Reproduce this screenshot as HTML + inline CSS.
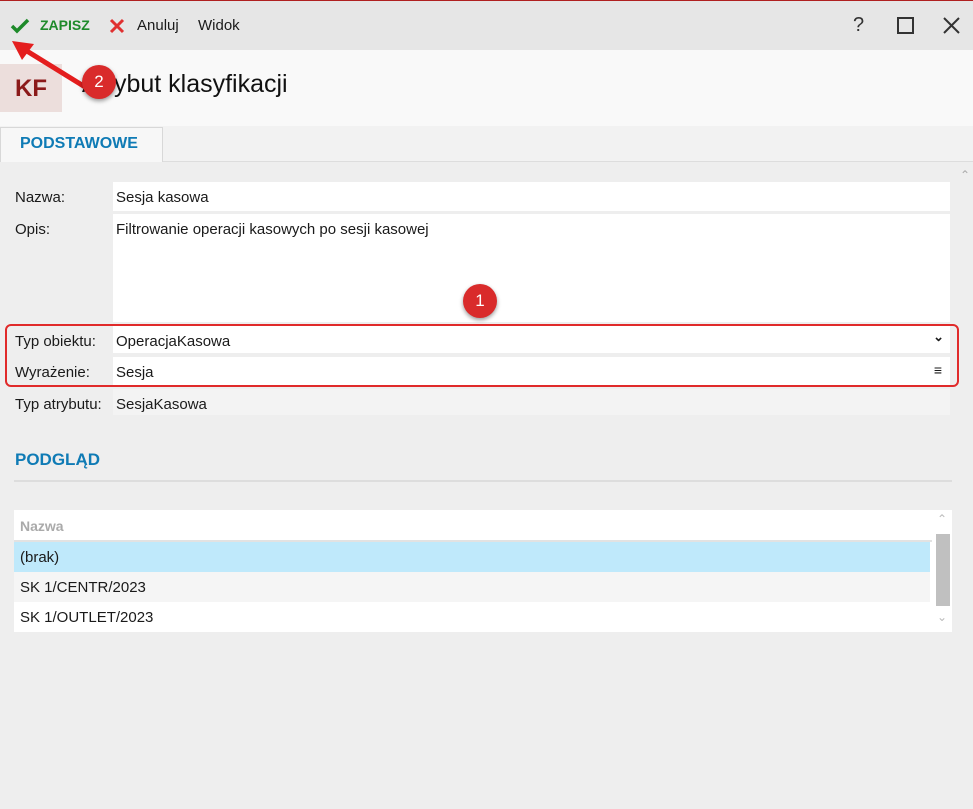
<!DOCTYPE html>
<html><head><meta charset="utf-8"><style>
*{margin:0;padding:0;box-sizing:border-box}
body{width:973px;height:809px;background:#eeeeee;font-family:"Segoe UI","Liberation Sans",sans-serif;font-size:15px;color:#1a1a1a;position:relative;overflow:hidden}
.a{position:absolute}
.inp{position:absolute;background:#fff;left:113px;width:837px;padding:7px 3px;}
.lbl{position:absolute;left:15px;}
</style></head><body>
<div class="a" style="left:0;top:0;width:973px;height:50px;background:#e6e6e6;border-top:1px solid #b02020"></div>
<svg class="a" style="left:10px;top:17px" width="20" height="18"><path d="M2 9 L7 14 L18 3" stroke="#1e8a2a" stroke-width="3.5" fill="none"/></svg>
<div class="a" style="left:40px;top:17px;color:#1e8a2a;font-weight:bold;font-size:14px">ZAPISZ</div>
<svg class="a" style="left:109px;top:18px" width="16" height="16"><path d="M2 2L14 14M14 2L2 14" stroke="#e03030" stroke-width="3"/></svg>
<div class="a" style="left:137px;top:17px">Anuluj</div>
<div class="a" style="left:198px;top:17px">Widok</div>
<div class="a" style="left:853px;top:14px;font-size:20px;color:#333">?</div>
<div class="a" style="left:897px;top:17px;width:17px;height:17px;border:2px solid #333"></div>
<svg class="a" style="left:942px;top:16px" width="19" height="19"><path d="M2 2L17 17M17 2L2 17" stroke="#333" stroke-width="2"/></svg>
<div class="a" style="left:0;top:50px;width:973px;height:76px;background:#f9f9f9"></div>
<div class="a" style="left:0;top:64px;width:62px;height:48px;background:#ecdedc;color:#8b1a1a;font-size:24px;font-weight:bold;text-align:center;line-height:50px">KF</div>
<div class="a" style="left:82px;top:70px;font-size:25px;color:#111">Atrybut klasyfikacji</div>
<div class="a" style="left:0;top:126px;width:973px;height:36px;background:#f2f2f2;border-bottom:1px solid #ddd"></div>
<div class="a" style="left:0;top:127px;width:163px;height:35px;background:#f7f7f7;border:1px solid #d8d8d8;border-bottom:none;color:#0f7bb5;font-weight:bold;font-size:16px;padding:7px 0 0 19px">PODSTAWOWE</div>
<div class="a" style="left:960px;top:168px;color:#aaa;font-size:12px">&#8963;</div>
<div class="lbl" style="top:189px">Nazwa:</div><div class="inp" style="top:182px;height:29px">Sesja kasowa</div>
<div class="lbl" style="top:221px">Opis:</div><div class="inp" style="top:214px;height:108px">Filtrowanie operacji kasowych po sesji kasowej</div>
<div class="lbl" style="top:333px">Typ obiektu:</div><div class="inp" style="top:326px;height:27px">OperacjaKasowa<span style="position:absolute;right:6px;top:3px;font-size:13px;font-weight:bold">&#8964;</span></div>
<div class="lbl" style="top:364px">Wyrażenie:</div><div class="inp" style="top:357px;height:29px">Sesja<span style="position:absolute;right:8px;top:5px;font-size:14px">&#8801;</span></div>
<div class="lbl" style="top:396px">Typ atrybutu:</div><div class="inp" style="top:389px;height:26px;background:#f3f3f3">SesjaKasowa</div>
<div class="a" style="left:5px;top:324px;width:954px;height:63px;border:2px solid #e02a2a;border-radius:6px"></div>
<div class="a" style="left:463px;top:284px;width:34px;height:34px;border-radius:50%;background:#d92b2b;color:#fff;text-align:center;line-height:34px;font-size:17px;box-shadow:0 2px 4px rgba(0,0,0,.4)">1</div>
<div class="a" style="left:15px;top:450px;color:#0f7bb5;font-weight:bold;font-size:17px">PODGLĄD</div>
<div class="a" style="left:14px;top:480px;width:938px;height:2px;background:#ddd"></div>
<div class="a" style="left:14px;top:510px;width:938px;height:122px;background:#fff"></div>
<div class="a" style="left:20px;top:518px;color:#aaa;font-weight:bold;font-size:14px">Nazwa</div>
<div class="a" style="left:14px;top:540px;width:918px;height:2px;background:#e2e2e2"></div>
<div class="a" style="left:14px;top:542px;width:916px;height:30px;background:#bfe9fb;padding:7px 6px">(brak)</div>
<div class="a" style="left:14px;top:572px;width:916px;height:30px;background:#f5f5f5;padding:7px 6px">SK 1/CENTR/2023</div>
<div class="a" style="left:14px;top:602px;width:916px;height:30px;background:#fff;padding:7px 6px">SK 1/OUTLET/2023</div>
<div class="a" style="left:936px;top:534px;width:14px;height:72px;background:#c0c0c0"></div>
<div class="a" style="left:937px;top:512px;color:#bbb;font-size:12px">&#8963;</div>
<div class="a" style="left:937px;top:610px;color:#bbb;font-size:12px">&#8964;</div>
<svg class="a" style="left:0;top:30px" width="110" height="80"><path d="M90 60 L22 18" stroke="#e41e1e" stroke-width="5"/><path d="M12 11 L34 14 L22 30 Z" fill="#e41e1e"/></svg>
<div class="a" style="left:82px;top:65px;width:34px;height:34px;border-radius:50%;background:#d92b2b;color:#fff;text-align:center;line-height:34px;font-size:17px;box-shadow:0 2px 4px rgba(0,0,0,.4)">2</div>
</body></html>
